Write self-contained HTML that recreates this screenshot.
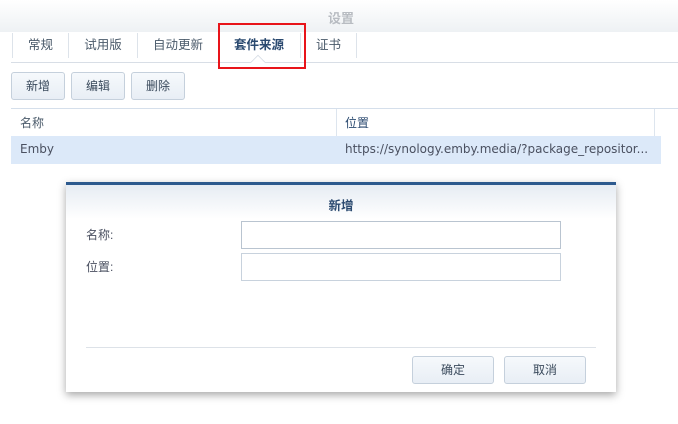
<!DOCTYPE html>
<html><head><meta charset="utf-8"><style>
*{margin:0;padding:0;box-sizing:border-box}
body{width:678px;height:424px;background:#fff;position:relative;overflow:hidden;font-family:"Liberation Sans","Noto Sans CJK SC",sans-serif;font-size:12px;color:#3a4a5c}
.abs{position:absolute}
.hdr{left:0;top:0;width:678px;height:32px;background:linear-gradient(#fff,#eef1f4)}
.tab{top:33px;height:25px;line-height:25px;text-align:center;color:#4a5a6a;font-size:12.5px}
.sep{top:33px;width:1px;height:25px;background:#dde3ea}
.btn{height:28px;line-height:26px;text-align:center;border:1px solid #c5d0dc;border-radius:3px;background:linear-gradient(#f6f9fc,#e8eef5);color:#3a4a5c}
input{position:absolute;border:1px solid #b9c4d0;background:#fff}
.dv{font-family:"DejaVu Sans","Noto Sans CJK SC",sans-serif;font-size:12px;color:#4a5060}
</style></head><body>
<div class="abs hdr"></div>
<div class="abs" style="left:328px;top:8px;color:#b8bcc2;font-size:13px;font-weight:bold">设置</div>
<div class="abs sep" style="left:12px"></div>
<div class="abs tab" style="left:13px;width:55px">常规</div>
<div class="abs sep" style="left:68px"></div>
<div class="abs tab" style="left:69px;width:68px">试用版</div>
<div class="abs sep" style="left:137px"></div>
<div class="abs tab" style="left:138px;width:80px">自动更新</div>
<div class="abs tab" style="left:218px;width:82px;font-weight:bold;color:#2b4a70">套件来源</div>
<div class="abs sep" style="left:300px"></div>
<div class="abs tab" style="left:301px;width:55px">证书</div>
<div class="abs sep" style="left:356px"></div>
<div class="abs" style="left:11px;top:62px;width:667px;height:1px;background:#d8dee6"></div>
<div class="abs" style="left:252px;top:57px;width:12px;height:12px;border-left:1px solid #d8dee6;border-top:1px solid #d8dee6;background:#fff;transform:rotate(45deg);clip-path:polygon(0 0,100% 0,0 100%)"></div>
<div class="abs" style="left:218px;top:23px;width:88px;height:46px;border:2px solid #e8141a"></div>
<div class="abs btn" style="left:11px;top:72px;width:54px">新增</div>
<div class="abs btn" style="left:71px;top:72px;width:54px">编辑</div>
<div class="abs btn" style="left:131px;top:72px;width:54px">删除</div>
<div class="abs" style="left:11px;top:108px;width:667px;height:1px;background:#d5dfeb"></div>
<div class="abs" style="left:20px;top:114px;color:#4a5a6a">名称</div>
<div class="abs" style="left:336px;top:109px;width:1px;height:27px;background:#dde5ee"></div>
<div class="abs" style="left:345px;top:114px;color:#2b4a70">位置</div>
<div class="abs" style="left:654px;top:109px;width:1px;height:27px;background:#dde5ee"></div>
<div class="abs" style="left:11px;top:136px;width:650px;height:28px;background:#dce9f9"></div>
<div class="abs dv" style="left:20px;top:142px">Emby</div>
<div class="abs dv" style="left:345px;top:142px;white-space:nowrap">https://synology.emby.media/?package_repositor...</div>
<div class="abs" style="left:66px;top:182px;width:550px;height:210px;background:#fff;border-top:3px solid #2d5a8e;box-shadow:0 3px 8px rgba(0,0,0,.35)">
<div class="abs" style="left:0;top:0;width:550px;height:34px;background:linear-gradient(#e6ecf3,#fff)"></div>
<div class="abs" style="left:0;top:10px;width:550px;text-align:center;font-weight:bold;color:#2b4a70;font-size:12.5px">新增</div>
<div class="abs" style="left:20px;top:41px;color:#4a5060">名称:</div>
<div class="abs" style="left:20px;top:73px;color:#4a5060">位置:</div>
<input style="left:175px;top:36px;width:320px;height:28px">
<input style="left:175px;top:68px;width:320px;height:28px;border-color:#c8d2dd">
<div class="abs" style="left:20px;top:162px;width:510px;height:1px;background:#dde2e8"></div>
<div class="abs btn" style="left:346px;top:171px;width:82px">确定</div>
<div class="abs btn" style="left:438px;top:171px;width:82px">取消</div>
</div>
</body></html>
